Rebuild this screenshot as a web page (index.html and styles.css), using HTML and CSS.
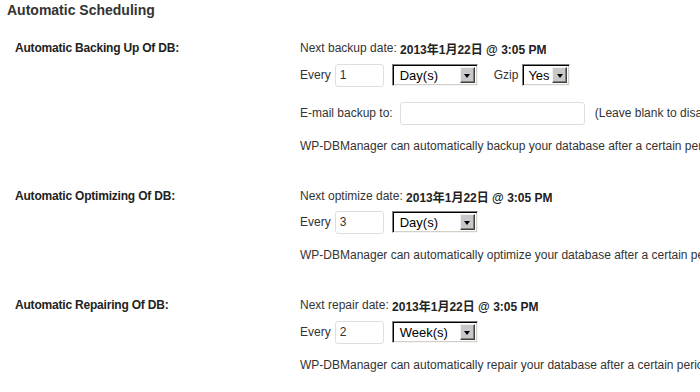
FILE: index.html
```html
<!DOCTYPE html>
<html>
<head>
<meta charset="utf-8">
<title>Automatic Scheduling</title>
<link rel="stylesheet" href="styles.css">
</head>
<body>
<h3 class="title">Automatic Scheduling</h3>
<div class="sched">
  <div class="row row-backup">
    <div class="label">Automatic Backing Up Of DB:</div>
    <div class="field">
      <div class="line l-next">Next backup date:&nbsp;<b>2013年1月22日 @ 3:05 PM</b></div>
      <div class="line l-every">
        <span>Every</span>
        <span class="input num">1</span>
        <span class="select sel-day"><span class="sel-text">Day(s)</span><span class="sel-btn"><span class="tri"></span></span></span>
        <span class="gzip">Gzip</span>
        <span class="select sel-yes"><span class="sel-text">Yes</span><span class="sel-btn"><span class="tri"></span></span></span>
      </div>
      <div class="line l-email">
        <span>E-mail backup to:</span>
        <span class="input email"></span>
        <span class="hint">(Leave blank to disable this feature)</span>
      </div>
      <div class="line l-desc">WP-DBManager can automatically backup your database after a certain period.</div>
    </div>
  </div>
  <div class="row row-opt">
    <div class="label">Automatic Optimizing Of DB:</div>
    <div class="field">
      <div class="line l-next">Next optimize date:&nbsp;<b>2013年1月22日 @ 3:05 PM</b></div>
      <div class="line l-every">
        <span>Every</span>
        <span class="input num">3</span>
        <span class="select sel-day"><span class="sel-text">Day(s)</span><span class="sel-btn"><span class="tri"></span></span></span>
      </div>
      <div class="line l-desc">WP-DBManager can automatically optimize your database after a certain period.</div>
    </div>
  </div>
  <div class="row row-rep">
    <div class="label">Automatic Repairing Of DB:</div>
    <div class="field">
      <div class="line l-next">Next repair date:&nbsp;<b>2013年1月22日 @ 3:05 PM</b></div>
      <div class="line l-every">
        <span>Every</span>
        <span class="input num">2</span>
        <span class="select sel-day"><span class="sel-text">Week(s)</span><span class="sel-btn"><span class="tri"></span></span></span>
      </div>
      <div class="line l-desc">WP-DBManager can automatically repair your database after a certain period.</div>
    </div>
  </div>
</div>
</body>
</html>
```
FILE: styles.css
```css
html, body {
  margin: 0;
  padding: 0;
  background: #fff;
}
body {
  width: 700px;
  height: 392px;
  overflow: hidden;
  font-family: "Liberation Sans", "Noto Sans CJK SC", Arial, sans-serif;
  font-size: 12px;
  color: #333;
}
.title {
  margin: 0;
  padding-left: 7px;
  font-size: 14px;
  line-height: 20px;
  font-weight: bold;
  color: #333;
}
.sched {
  padding-left: 15px;
}
.row {
  display: grid;
  grid-template-columns: 285px 1fr;
}
.label {
  font-weight: bold;
  color: #222;
  line-height: 16px;
  letter-spacing: -0.2px;
  white-space: nowrap;
}
.field {
  display: flex;
  flex-direction: column;
  min-width: 0;
  overflow: hidden;
}
.line {
  display: flex;
  align-items: center;
  white-space: nowrap;
}
.line > * {
  flex-shrink: 0;
}
.line b {
  color: #222;
}
.l-next, .l-desc {
  height: 16px;
}
.l-every, .l-email {
  height: 24px;
}

/* vertical rhythm per section */
.row-backup { margin-top: 20px; }
.row-backup .l-every { margin-top: 7px; }
.row-backup .l-email { margin-top: 14px; }
.row-backup .l-desc { margin-top: 13px; }

.row-opt { margin-top: 34px; }
.row-opt .l-every { margin-top: 6px; }
.row-opt .l-desc { margin-top: 13px; }

.row-rep { margin-top: 34px; }
.row-rep .l-every { margin-top: 7px; }
.row-rep .l-desc { margin-top: 13px; }

/* text inputs */
.input {
  box-sizing: border-box;
  display: flex;
  align-items: center;
  height: 23px;
  border: 1px solid #dfdfdf;
  border-radius: 3px;
  background: #fff;
  padding-left: 4px;
  color: #333;
}
.num {
  width: 49px;
  margin-left: 4px;
}
.email {
  width: 185px;
  margin-left: 7px;
}
.hint {
  margin-left: 10px;
}
.gzip {
  margin-left: 16px;
}

/* classic windows select */
.select {
  box-sizing: border-box;
  display: flex;
  align-items: center;
  justify-content: space-between;
  height: 22px;
  border: 1px solid;
  border-color: #808080 #f4f4f4 #f4f4f4 #808080;
  box-shadow: inset 1px 1px 0 #000, inset -1px -1px 0 #d4d0c8;
  background: #fff;
  color: #000;
  font-size: 13px;
  padding: 2px 2px 2px 7px;
}
.sel-day {
  width: 86px;
  margin-left: 8px;
}
.sel-yes {
  width: 48px;
  margin-left: 4px;
  padding-left: 5px;
}
.sel-btn {
  box-sizing: border-box;
  width: 15px;
  height: 16px;
  background: #c8c8c8;
  border: 1px solid;
  border-color: #f0f0f0 #404040 #404040 #f0f0f0;
  box-shadow: inset -1px -1px 0 #808080;
  display: flex;
  align-items: center;
  justify-content: center;
}
.tri {
  width: 0;
  height: 0;
  border-left: 3.5px solid transparent;
  border-right: 3.5px solid transparent;
  border-top: 4px solid #000;
  margin-top: 1px;
}
```
